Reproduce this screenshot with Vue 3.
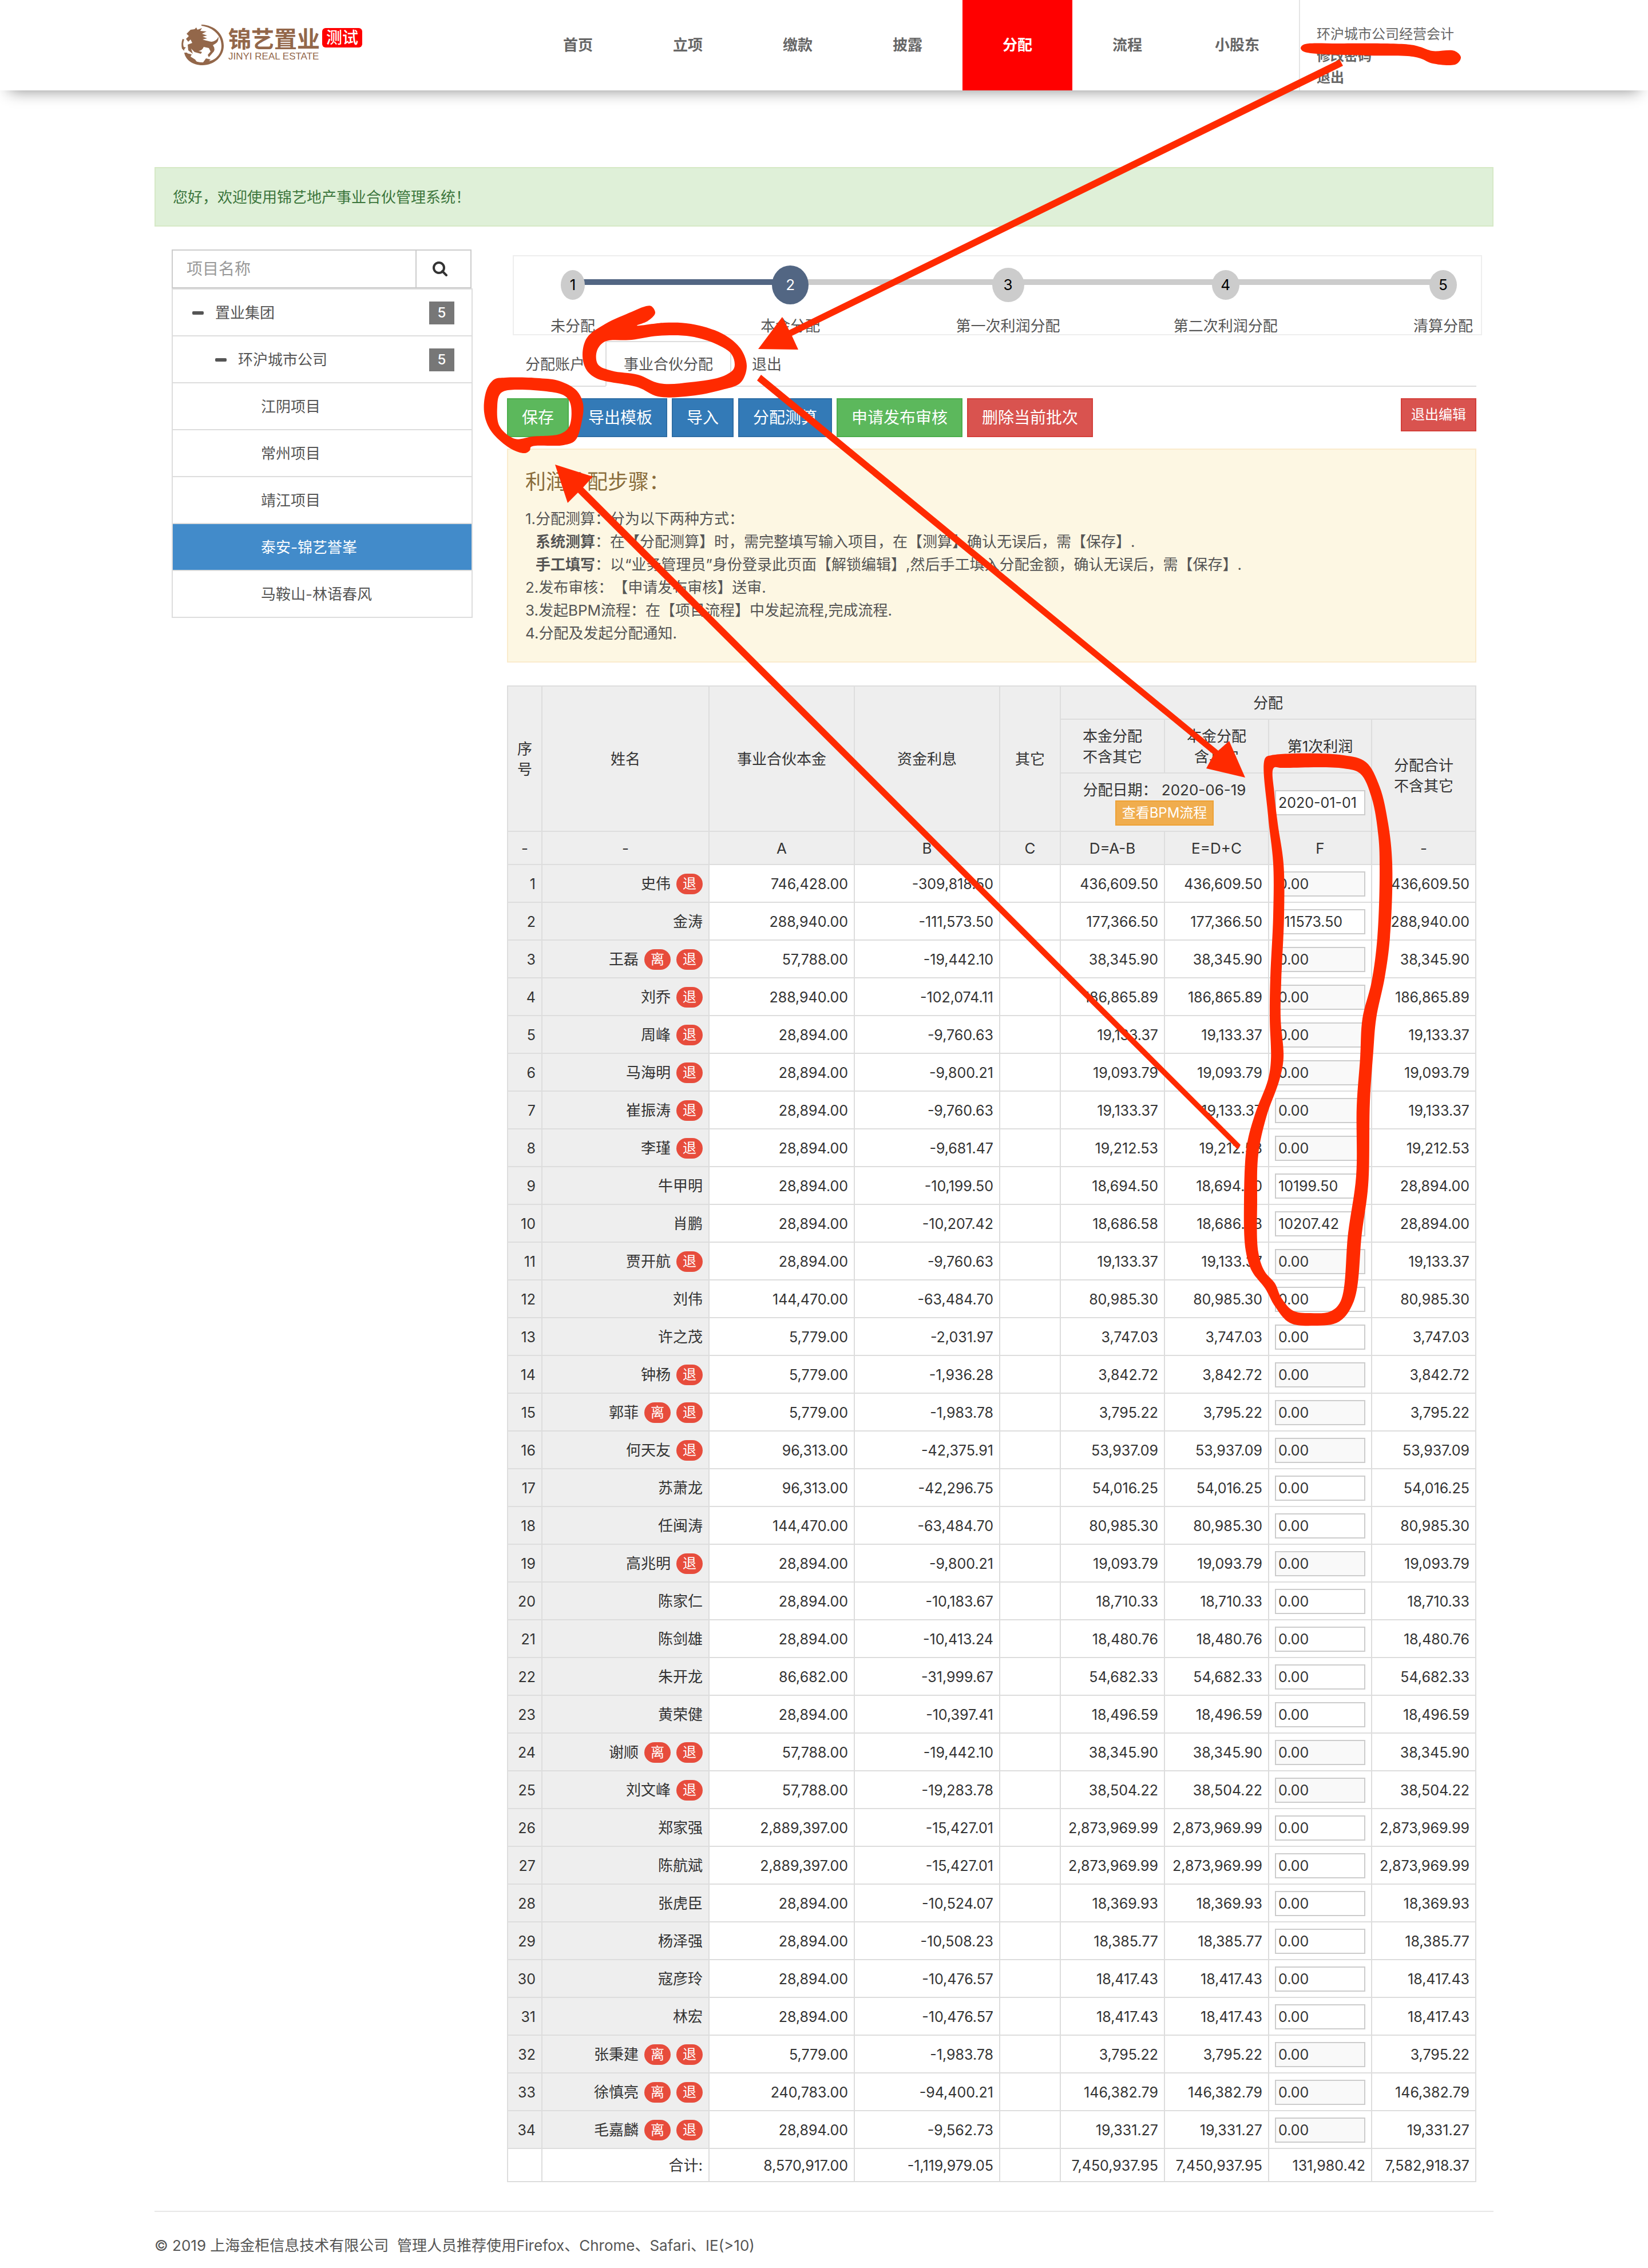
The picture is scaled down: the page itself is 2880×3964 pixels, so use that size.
<script setup>
import { ref } from 'vue'

const navItems = ['首页', '立项', '缴款', '披露', '分配', '流程', '小股东']
const activeNav = '分配'

const tree = [
  { name: '置业集团', level: 0, count: 5 },
  { name: '环沪城市公司', level: 1, count: 5 },
  { name: '江阴项目', level: 2 },
  { name: '常州项目', level: 2 },
  { name: '靖江项目', level: 2 },
  { name: '泰安-锦艺誉峯', level: 2, active: true },
  { name: '马鞍山-林语春风', level: 2 }
]

const steps = [
  { label: '未分配', size: 'first' },
  { label: '本金分配', size: 'current' },
  { label: '第一次利润分配', size: 'next' },
  { label: '第二次利润分配', size: 'plain' },
  { label: '清算分配', size: 'plain' }
]

const actions = [
  { text: '保存', kind: 'success' },
  { text: '导出模板', kind: 'primary' },
  { text: '导入', kind: 'primary' },
  { text: '分配测算', kind: 'primary' },
  { text: '申请发布审核', kind: 'success' },
  { text: '删除当前批次', kind: 'danger' }
]

const keyword = ref('')
const profitDate = ref('2020-01-01')

// name, badges, capital (A), interest (B), principal (D and E), profit (F), total
const rows = ref(
  [
    ['史伟', '退', '746,428.00', '-309,818.50', '436,609.50', '0.00', '436,609.50'],
    ['金涛', '', '288,940.00', '-111,573.50', '177,366.50', '111573.50', '288,940.00'],
    ['王磊', '离退', '57,788.00', '-19,442.10', '38,345.90', '0.00', '38,345.90'],
    ['刘乔', '退', '288,940.00', '-102,074.11', '186,865.89', '0.00', '186,865.89'],
    ['周峰', '退', '28,894.00', '-9,760.63', '19,133.37', '0.00', '19,133.37'],
    ['马海明', '退', '28,894.00', '-9,800.21', '19,093.79', '0.00', '19,093.79'],
    ['崔振涛', '退', '28,894.00', '-9,760.63', '19,133.37', '0.00', '19,133.37'],
    ['李瑾', '退', '28,894.00', '-9,681.47', '19,212.53', '0.00', '19,212.53'],
    ['牛甲明', '', '28,894.00', '-10,199.50', '18,694.50', '10199.50', '28,894.00'],
    ['肖鹏', '', '28,894.00', '-10,207.42', '18,686.58', '10207.42', '28,894.00'],
    ['贾开航', '退', '28,894.00', '-9,760.63', '19,133.37', '0.00', '19,133.37'],
    ['刘伟', '', '144,470.00', '-63,484.70', '80,985.30', '0.00', '80,985.30'],
    ['许之茂', '', '5,779.00', '-2,031.97', '3,747.03', '0.00', '3,747.03'],
    ['钟杨', '退', '5,779.00', '-1,936.28', '3,842.72', '0.00', '3,842.72'],
    ['郭菲', '离退', '5,779.00', '-1,983.78', '3,795.22', '0.00', '3,795.22'],
    ['何天友', '退', '96,313.00', '-42,375.91', '53,937.09', '0.00', '53,937.09'],
    ['苏萧龙', '', '96,313.00', '-42,296.75', '54,016.25', '0.00', '54,016.25'],
    ['任闽涛', '', '144,470.00', '-63,484.70', '80,985.30', '0.00', '80,985.30'],
    ['高兆明', '退', '28,894.00', '-9,800.21', '19,093.79', '0.00', '19,093.79'],
    ['陈家仁', '', '28,894.00', '-10,183.67', '18,710.33', '0.00', '18,710.33'],
    ['陈剑雄', '', '28,894.00', '-10,413.24', '18,480.76', '0.00', '18,480.76'],
    ['朱开龙', '', '86,682.00', '-31,999.67', '54,682.33', '0.00', '54,682.33'],
    ['黄荣健', '', '28,894.00', '-10,397.41', '18,496.59', '0.00', '18,496.59'],
    ['谢顺', '离退', '57,788.00', '-19,442.10', '38,345.90', '0.00', '38,345.90'],
    ['刘文峰', '退', '57,788.00', '-19,283.78', '38,504.22', '0.00', '38,504.22'],
    ['郑家强', '', '2,889,397.00', '-15,427.01', '2,873,969.99', '0.00', '2,873,969.99'],
    ['陈航斌', '', '2,889,397.00', '-15,427.01', '2,873,969.99', '0.00', '2,873,969.99'],
    ['张虎臣', '', '28,894.00', '-10,524.07', '18,369.93', '0.00', '18,369.93'],
    ['杨泽强', '', '28,894.00', '-10,508.23', '18,385.77', '0.00', '18,385.77'],
    ['寇彦玲', '', '28,894.00', '-10,476.57', '18,417.43', '0.00', '18,417.43'],
    ['林宏', '', '28,894.00', '-10,476.57', '18,417.43', '0.00', '18,417.43'],
    ['张秉建', '离退', '5,779.00', '-1,983.78', '3,795.22', '0.00', '3,795.22'],
    ['徐慎亮', '离退', '240,783.00', '-94,400.21', '146,382.79', '0.00', '146,382.79'],
    ['毛嘉麟', '离退', '28,894.00', '-9,562.73', '19,331.27', '0.00', '19,331.27']
  ].map(([name, badges, capital, interest, principal, profit, total]) => ({
    name,
    badges: [...badges],
    capital,
    interest,
    principal,
    profit,
    total
  }))
)

// Closed smooth curve through a list of points
function smooth(points) {
  const n = points.length
  const at = (i) => points[(i + n) % n]
  let d = `M${points[0][0]} ${points[0][1]}`
  for (let i = 0; i < n; i++) {
    const [p0, p1, p2, p3] = [at(i - 1), at(i), at(i + 1), at(i + 2)]
    const len = (a, b) => Math.sqrt(Math.hypot(a[0] - b[0], a[1] - b[1])) || 1
    const a = len(p0, p1)
    const b = len(p1, p2)
    const c = len(p2, p3)
    const c1 = [0, 1].map(
      (k) => (a * a * p2[k] - b * b * p0[k] + (2 * a * a + 3 * a * b + b * b) * p1[k]) / (3 * a * (a + b))
    )
    const c2 = [0, 1].map(
      (k) => (c * c * p1[k] - b * b * p3[k] + (2 * c * c + 3 * c * b + b * b) * p2[k]) / (3 * c * (c + b))
    )
    d += `C${[...c1, ...c2].map((v) => v.toFixed(1)).join(' ')} ${p2[0]} ${p2[1]}`
  }
  return d + 'Z'
}

const arrows = [
  '1325,610 1367,554 1379,577 2341,104 2347,115 1384,587 1395,611',
  '2176,1359 2108,1343 2121,1319 1323,665 1330,655 2129,1312 2148,1295',
  '970,812 1036,833 1019,852 2168,2001 2163,2009 1010,861 992,879'
]

const strokes = [
  smooth([[2273, 84], [2278, 78], [2340, 76], [2464, 78], [2482, 82], [2503, 89], [2542, 89], [2553, 100], [2545, 112], [2504, 111], [2482, 102], [2460, 98], [2390, 97], [2278, 90]]),
  smooth([[883, 660], [943, 661], [978, 666], [1008, 683], [1019, 706], [1016, 740], [1005, 770], [985, 778], [928, 781], [926, 787], [918, 792], [894, 785], [858, 753], [846, 720], [851, 680], [864, 663]]) +
    smooth([[883, 683], [955, 684], [987, 692], [997, 706], [995, 745], [980, 758], [930, 763], [900, 767], [873, 745], [869, 710], [873, 690]]),
  smooth([[1138, 535], [1145, 547], [1132, 561], [1113, 569], [1161, 564], [1207, 566], [1262, 583], [1294, 609], [1305, 640], [1294, 669], [1259, 682], [1207, 692], [1150, 693], [1115, 677], [1042, 661], [1024, 645], [1018, 620], [1026, 590], [1058, 566], [1104, 545], [1126, 536]]) +
    smooth([[1057, 597], [1043, 614], [1045, 637], [1069, 648], [1115, 655], [1153, 670], [1207, 668], [1265, 657], [1283, 643], [1279, 620], [1253, 602], [1207, 588], [1150, 587], [1104, 594]]),
  smooth([[2211, 1325], [2222, 1320], [2348, 1320], [2387, 1332], [2411, 1375], [2426, 1440], [2433, 1509], [2429, 1639], [2420, 1708], [2405, 1780], [2400, 1837], [2394, 1925], [2391, 2071], [2380, 2155], [2366, 2274], [2340, 2310], [2297, 2317], [2254, 2312], [2228, 2283], [2211, 2252], [2188, 2222], [2177, 2186], [2174, 2097], [2179, 2002], [2193, 1948], [2216, 1887], [2221, 1853], [2219, 1780], [2220, 1708], [2225, 1601], [2225, 1509], [2216, 1425]]) +
    smooth([[2226, 1342], [2240, 1342], [2348, 1343], [2377, 1352], [2397, 1394], [2409, 1463], [2411, 1524], [2407, 1639], [2397, 1716], [2381, 1780], [2377, 1849], [2371, 1933], [2370, 2055], [2356, 2155], [2343, 2274], [2325, 2292], [2290, 2295], [2260, 2291], [2239, 2268], [2228, 2243], [2210, 2222], [2199, 2189], [2197, 2097], [2199, 2017], [2213, 1952], [2236, 1887], [2243, 1849], [2238, 1780], [2239, 1716], [2244, 1601], [2243, 1509], [2233, 1440], [2227, 1387]])
]
</script>

<template>
  <div class="page">
    <header class="topbar">
      <div class="wrap topbar-inner">
        <a class="logo" href="#">
          <svg class="logo-mark" viewBox="0 0 76 72" aria-hidden="true">
            <path d="M36 1C60 2 75 18 75 38C75 57 58 72 38 72C20 72 8 62 6 50L11 50C14 60 24 67 38 67C57 67 71 55 71 38C71 20 57 6 36 3Z" />
            <path d="M24 9L27 6L29 10L37 7L34 12L45 13L37 17L46 20L38 22L46 25L38 27Q48 30 54 31Q62 30 66 22Q66 31 61 34L56 37Q62 45 55 51L49 58L47 54L52 48L49 42L40 40Q37 47 31 47L37 49L35 52L24 49L18 43L21 52L13 46L12 36L20 33L17 27L13 31L9 26L14 21L10 17L17 10Z" />
            <path d="M3 26L6 27Q3 34 5 40L9 41Q5 44 6 47L2 43Q0 34 3 26Z" />
            <path d="M10 51L19 53L17 57L25 62L30 69L20 66L11 57ZM44 60L52 62L49 65L59 62L46 70L39 67Z" />
          </svg>
          <span class="logo-words">
            <span class="logo-cn">锦艺置业</span>
            <span class="logo-en">JINYI REAL ESTATE</span>
          </span>
          <span class="logo-tag">测试</span>
        </a>
        <nav class="nav">
          <a v-for="item in navItems" :key="item" href="#" :class="{ active: item === activeNav }">{{ item }}</a>
        </nav>
        <div class="user">
          <span>环沪城市公司经营会计</span>
          <a href="#">修改密码</a>
          <a href="#">退出</a>
        </div>
      </div>
    </header>

    <div class="wrap">
      <div class="welcome">您好，欢迎使用锦艺地产事业合伙管理系统！</div>

      <div class="columns">
        <aside class="sidebar">
          <form class="search" @submit.prevent>
            <input v-model="keyword" type="text" placeholder="项目名称" aria-label="项目名称" />
            <button type="submit" aria-label="搜索">
              <svg viewBox="0 0 26 26" aria-hidden="true">
                <circle cx="11" cy="11" r="9" fill="none" stroke="#333" stroke-width="4" />
                <path d="M17 17L24 24" stroke="#333" stroke-width="4" stroke-linecap="round" />
              </svg>
            </button>
          </form>
          <ul class="tree">
            <li v-for="node in tree" :key="node.name">
              <a href="#" :class="['level' + node.level, { active: node.active }]">
                <i v-if="node.count" class="minus"></i>
                <span class="node-name">{{ node.name }}</span>
                <span v-if="node.count" class="count">{{ node.count }}</span>
              </a>
            </li>
          </ul>
        </aside>

        <main class="main">
          <ol class="steps">
            <li v-for="(step, i) in steps" :key="step.label" :class="step.size">
              <span class="dot-row"><span class="dot">{{ i + 1 }}</span></span>
              <span class="step-label">{{ step.label }}</span>
            </li>
          </ol>

          <nav class="tabs">
            <a href="#">分配账户</a>
            <a href="#" class="active">事业合伙分配</a>
            <a href="#">退出</a>
          </nav>

          <div class="toolbar">
            <button v-for="a in actions" :key="a.text" type="button" :class="['btn', a.kind]">{{ a.text }}</button>
            <button type="button" class="btn small danger exit">退出编辑</button>
          </div>

          <section class="guide">
            <h4>利润分配步骤：</h4>
            <p>1.分配测算：分为以下两种方式：</p>
            <p class="sub"><b>系统测算</b>：在【分配测算】时，需完整填写输入项目，在【测算】确认无误后，需【保存】.</p>
            <p class="sub"><b>手工填写</b>：以“业务管理员”身份登录此页面【解锁编辑】,然后手工填入分配金额，确认无误后，需【保存】.</p>
            <p>2.发布审核：【申请发布审核】送审.</p>
            <p>3.发起BPM流程：在【项目流程】中发起流程,完成流程.</p>
            <p>4.分配及发起分配通知.</p>
          </section>

          <table class="grid">
            <colgroup>
              <col class="c-no" /><col class="c-name" /><col class="c-wide" /><col class="c-wide" /><col class="c-other" />
              <col class="c-sum" /><col class="c-sum" /><col class="c-input" /><col class="c-sum" />
            </colgroup>
            <thead>
              <tr class="h-short">
                <th rowspan="3">序号</th>
                <th rowspan="3">姓名</th>
                <th rowspan="3">事业合伙本金</th>
                <th rowspan="3">资金利息</th>
                <th rowspan="3">其它</th>
                <th colspan="4">分配</th>
              </tr>
              <tr class="h-double">
                <th>本金分配<br />不含其它</th>
                <th>本金分配<br />含其它</th>
                <th>第1次利润</th>
                <th rowspan="2">分配合计<br />不含其它</th>
              </tr>
              <tr class="h-date">
                <th colspan="2">
                  <div>分配日期：&nbsp;<span>2020-06-19</span></div>
                  <button type="button" class="btn tiny warning">查看BPM流程</button>
                </th>
                <th class="field"><input v-model="profitDate" type="text" aria-label="第1次利润日期" /></th>
              </tr>
              <tr class="h-short">
                <th>-</th><th>-</th><th>A</th><th>B</th><th>C</th><th>D=A-B</th><th>E=D+C</th><th>F</th><th>-</th>
              </tr>
            </thead>
            <tbody>
              <tr v-for="(row, i) in rows" :key="row.name">
                <td class="shade">{{ i + 1 }}</td>
                <td class="shade name">
                  <div class="person">
                    <span>{{ row.name }}</span>
                    <span v-for="b in row.badges" :key="b" class="badge">{{ b }}</span>
                  </div>
                </td>
                <td>{{ row.capital }}</td>
                <td>{{ row.interest }}</td>
                <td></td>
                <td>{{ row.principal }}</td>
                <td>{{ row.principal }}</td>
                <td class="field">
                  <input v-model="row.profit" type="text" :disabled="row.badges.length > 0" :aria-label="row.name + ' 第1次利润'" />
                </td>
                <td>{{ row.total }}</td>
              </tr>
            </tbody>
            <tfoot>
              <tr class="h-short">
                <td></td>
                <td class="name">合计:</td>
                <td>8,570,917.00</td>
                <td>-1,119,979.05</td>
                <td></td>
                <td>7,450,937.95</td>
                <td>7,450,937.95</td>
                <td>131,980.42</td>
                <td>7,582,918.37</td>
              </tr>
            </tfoot>
          </table>
        </main>
      </div>

      <footer class="footer">© 2019 上海金柜信息技术有限公司&nbsp; 管理人员推荐使用Firefox、Chrome、Safari、IE(&gt;10)</footer>
    </div>

    <svg class="marks" viewBox="0 0 2880 3964" width="2880" height="3964" aria-hidden="true">
      <polygon v-for="a in arrows" :key="a" :points="a" />
      <path v-for="s in strokes" :key="s" :d="s" fill-rule="evenodd" />
    </svg>
  </div>
</template>

<style>
body {
  margin: 0;
  background: #fff;
}
</style>

<style scoped>
* {
  box-sizing: border-box;
}
.page {
  position: relative;
  overflow: hidden;
  font-family: Inter, 'Noto Sans CJK SC', sans-serif;
  font-size: 26px;
  line-height: 40px;
  text-spacing-trim: space-all;
  color: #555;
}
a {
  color: inherit;
  text-decoration: none;
}
button,
input {
  font-family: inherit;
  margin: 0;
  border-radius: 0;
}
ul,
ol {
  list-style: none;
  margin: 0;
  padding: 0;
}
.wrap {
  max-width: 2340px;
  margin: 0 auto;
}

.topbar {
  height: 158px;
  background: #fff;
  box-shadow: 0 16px 26px -16px rgba(0, 0, 0, 0.48);
}
.topbar-inner {
  display: flex;
  height: 100%;
}
.logo {
  display: flex;
  flex: none;
  width: 644px;
  padding: 42px 0 0 46px;
  color: #93674a;
}
.logo-mark {
  width: 76px;
  height: 72px;
  fill: #93674a;
}
.logo-words {
  display: flex;
  flex-direction: column;
  margin: 6px 4px 0 7px;
  white-space: nowrap;
}
.logo-cn {
  font-size: 40px;
  font-weight: 700;
  line-height: 42px;
}
.logo-en {
  font-family: 'Liberation Sans', sans-serif;
  font-size: 17px;
  line-height: 18px;
}
.logo-tag {
  height: 34px;
  margin-top: 7px;
  padding: 0 7px;
  border-radius: 6px;
  background: #f00;
  color: #fff;
  font-size: 28px;
  font-weight: 500;
  line-height: 34px;
}
.nav {
  display: flex;
}
.nav a {
  width: 192px;
  text-align: center;
  font-weight: 700;
  line-height: 158px;
  color: #666;
}
.nav a.active {
  background: #f00;
  color: #fff;
}
.user {
  display: flex;
  flex-direction: column;
  margin-left: 12px;
  padding: 41px 0 0 29px;
  border-left: 2px solid #e5e5e5;
  font-size: 24px;
  line-height: 38px;
  color: #666;
  white-space: nowrap;
}
.user a {
  font-weight: 700;
}

.welcome {
  margin-top: 134px;
  padding: 31px 30px 29px;
  border: 2px solid #d6e9c6;
  background: #dff0d8;
  color: #3c763d;
}
.columns {
  display: flex;
  gap: 60px;
  margin-top: 40px;
  padding: 0 30px;
}
.sidebar {
  flex: none;
  width: 526px;
}
.search {
  display: flex;
  height: 68px;
  margin-right: 2px;
}
.search input {
  flex: 1;
  min-width: 0;
  padding: 0 24px;
  border: 2px solid #ccc;
  font-size: 28px;
  color: #555;
}
.search input::placeholder {
  color: #999;
}
.search button {
  display: flex;
  align-items: center;
  width: 96px;
  padding: 0 0 0 28px;
  border: 2px solid #ccc;
  border-left: 0;
  background: #fff;
}
.search svg {
  width: 26px;
  height: 26px;
}
.tree {
  border: 2px solid #ddd;
}
.tree li + li {
  border-top: 2px solid #ddd;
}
.tree a {
  display: flex;
  align-items: center;
  height: 80px;
  padding: 2px 30px 0 34px;
}
.tree a.level1 {
  padding-left: 74px;
}
.tree a.level2 {
  padding-left: 154px;
}
.tree a.active {
  background: #428bca;
  color: #fff;
}
.minus {
  width: 20px;
  height: 6px;
  margin-right: 20px;
  border-radius: 2px;
  background: #555;
}
.node-name {
  flex: 1;
}
.count {
  width: 44px;
  background: #777;
  color: #fff;
  font-size: 24px;
  font-weight: 500;
  text-align: center;
}

.main {
  flex: 1;
  min-width: 0;
}
.steps {
  display: flex;
  justify-content: space-between;
  height: 140px;
  margin: 10px -10px 10px 10px;
  padding: 16px 10px 0 47px;
  border: 2px solid #eee;
}
.steps li {
  position: relative;
  display: flex;
  flex-direction: column;
  align-items: center;
  width: 112px;
  white-space: nowrap;
}
.dot-row {
  display: flex;
  flex: none;
  align-items: center;
  height: 68px;
}
.dot {
  position: relative;
  z-index: 1;
  display: flex;
  align-items: center;
  justify-content: center;
  width: 48px;
  height: 52px;
  border-radius: 50%;
  background: #ccc;
  color: #000;
}
.first .dot {
  width: 42px;
}
.current .dot {
  width: 64px;
  height: 68px;
  background: #526683;
  color: #fff;
}
.next .dot {
  width: 56px;
  height: 60px;
}
.steps li:not(:last-child)::after {
  content: '';
  position: absolute;
  top: 24px;
  left: 56px;
  width: 382px;
  height: 10px;
  background: #ccc;
}
.steps li.first::after {
  background: #526683;
}
.step-label {
  flex: none;
  margin-top: 18px;
}

.tabs {
  display: flex;
  gap: 4px;
  height: 80px;
  border-bottom: 2px solid #ddd;
}
.tabs a {
  height: 80px;
  padding: 19px 30px;
  border: 2px solid transparent;
}
.tabs a.active {
  border-color: #ddd;
  border-bottom-color: #fff;
}
.toolbar {
  display: flex;
  align-items: flex-start;
  gap: 8px;
  margin: 20px 0;
}
.btn {
  padding: 12px 24px;
  border: 2px solid;
  color: #fff;
  font-size: 28px;
  line-height: 40px;
  white-space: nowrap;
}
.btn.small {
  padding: 9px 16px;
  font-size: 24px;
  line-height: 36px;
}
.btn.tiny {
  display: block;
  margin: 0 auto;
  padding: 2px 10px;
  font-size: 24px;
  line-height: 36px;
}
.exit {
  margin-left: auto;
}
.success {
  background: #5cb85c;
  border-color: #4cae4c;
}
.primary {
  background: #337ab7;
  border-color: #2e6da4;
}
.danger {
  background: #d9534f;
  border-color: #d43f3a;
}
.warning {
  background: #f0ad4e;
  border-color: #eea236;
}

.guide {
  padding: 31px 30px 29px;
  border: 2px solid #faebcc;
  background: #fdf7e3;
}
.guide h4 {
  margin: 0 0 20px;
  color: #8a6d3b;
  font-size: 36px;
  font-weight: 400;
  line-height: 50px;
}
.guide p {
  margin: 0;
}
.guide .sub {
  padding-left: 18px;
}

.grid {
  width: 100%;
  margin-top: 40px;
  table-layout: fixed;
  border-collapse: collapse;
  color: #333;
  font-size: 25px;
  line-height: 36px;
}
.c-no { width: 60px; }
.c-name { width: 292px; }
.c-wide { width: 254px; }
.c-other { width: 106px; }
.c-sum { width: 182px; }
.c-input { width: 180px; }
.grid th,
.grid td {
  height: 66px;
  padding: 2px 10px 0;
  border: 2px solid #ddd;
  text-align: right;
  font-weight: 400;
}
.grid th {
  background: #eee;
  font-size: 26px;
  text-align: center;
}
.grid .h-short th,
.grid .h-short td {
  height: 58px;
}
.grid .h-double th {
  height: 94px;
}
.grid .h-date th {
  height: 102px;
}
.grid .shade {
  background: #eee;
}
.grid .name {
  font-size: 26px;
}
.person {
  display: flex;
  align-items: center;
  justify-content: flex-end;
  gap: 10px;
}
.badge {
  width: 46px;
  height: 36px;
  border-radius: 18px;
  background: #e74c3c;
  color: #fff;
  font-size: 24px;
  text-align: center;
}
.field input {
  display: block;
  width: 100%;
  height: 44px;
  padding: 0 4px;
  border: 2px solid #ccc;
  background: #fff;
  color: #333;
  font-size: 25px;
}
.field input:disabled {
  background: #f9f9f9;
}

.footer {
  margin-top: 50px;
  padding: 39px 0 19px;
  border-top: 2px solid #e7e7e7;
}
.marks {
  position: absolute;
  top: 0;
  left: 50%;
  margin-left: -1440px;
  z-index: 2;
  fill: #ff2a00;
  pointer-events: none;
}
</style>
